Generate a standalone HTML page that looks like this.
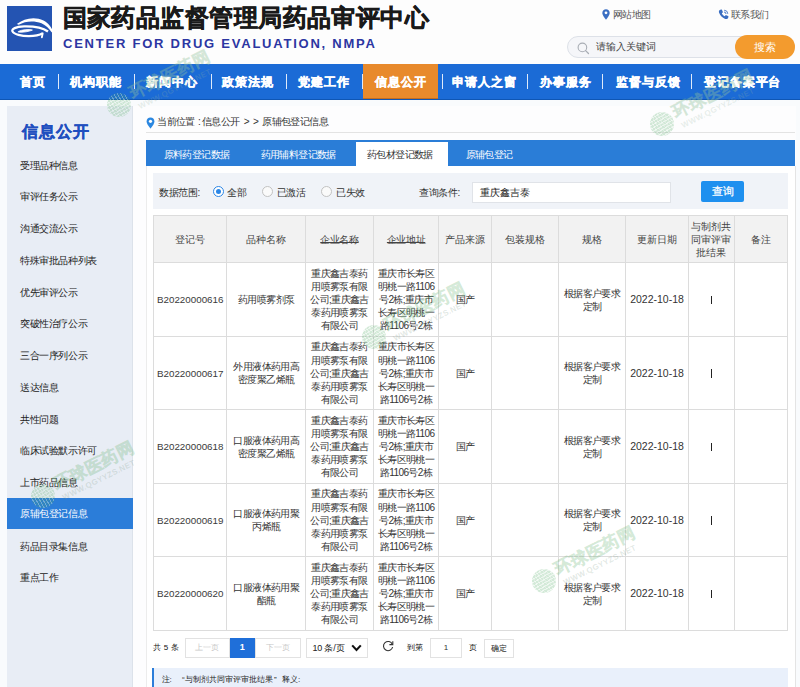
<!DOCTYPE html>
<html><head><meta charset="utf-8">
<style>
*{margin:0;padding:0;box-sizing:border-box}
html,body{width:800px;height:687px;overflow:hidden}
body{position:relative;background:#f9fbfd;font-family:"Liberation Sans",sans-serif;color:#333;font-size:10px}
.abs{position:absolute}
#header{left:0;top:0;width:800px;height:64px;background:#fdfdfd}
#logo{left:7px;top:6px;width:45px;height:45px;background:#2454b2}
#title{left:62.5px;top:2.5px;font-size:24px;font-weight:bold;-webkit-text-stroke:0.5px #1a1a1a;color:#1a1a1a;letter-spacing:0.45px;white-space:nowrap;line-height:30px}
#entitle{left:63px;top:35.5px;font-size:13px;font-weight:bold;color:#2c36a2;letter-spacing:1.77px;white-space:nowrap;line-height:16px}
.toplink{top:9px;font-size:10px;letter-spacing:-0.6px;color:#555;line-height:12px;white-space:nowrap}
#search{left:567px;top:35.7px;width:228px;height:22px;border:1px solid #dde1e8;border-radius:12px;background:#f5f6f9}
#search span{position:absolute;left:27.5px;top:4.8px;font-size:10px;letter-spacing:0.2px;color:#444;line-height:12px}
#sbtn{left:735px;top:35px;width:60px;height:24px;border-radius:12px;background:#f39b2e;color:#fff;font-size:11px;line-height:24px;text-align:center}
#nav{left:0;top:64px;width:800px;height:36px;background:#1b6bd6;border-bottom:1px solid #0f56b4}
.ni{position:absolute;top:0;height:36px;line-height:36px;color:#fff;font-size:12px;letter-spacing:0.9px;font-weight:bold;-webkit-text-stroke:0.45px #fff;white-space:nowrap}
.ns{position:absolute;top:10px;width:1.2px;height:15px;background:#dfeafa}
#navact{left:363px;top:0;width:75px;height:35px;background:#e88a2c;border-bottom:1px solid #c06d22}
#side{left:7px;top:106px;width:126px;height:581px;background:#e8edf5;box-shadow:inset -1px 0 0 #dce2ea}
#side h2{position:absolute;left:14.5px;top:15.5px;font-size:16px;letter-spacing:1.3px;-webkit-text-stroke:0.35px #1f4fbf;line-height:20px;color:#1f4fbf;font-weight:bold;white-space:nowrap}
.si{position:absolute;left:0;width:126px;height:31px;line-height:31px;padding-left:13px;font-size:10px;letter-spacing:-0.4px;color:#222;white-space:nowrap}
.si.act{background:#2b7dd9;color:#fff}
#content{left:133px;top:106px;width:663px;height:581px;background:#fdfdfe}

.crumb{top:116px;font-size:10px;letter-spacing:-0.6px;line-height:12px;color:#333;white-space:nowrap}
#panel{left:146px;top:166px;width:649.5px;height:521px;background:#fff;border-left:1px solid #ececec;border-right:1px solid #e4e4e4}
#tabbar{left:146px;top:140px;width:649px;height:26px;background:#2a7dd7}
#tabact{left:356px;top:142px;width:92px;height:24px;background:#fff}
.tab{top:148px;font-size:10px;letter-spacing:-0.6px;line-height:13px;color:#fff;white-space:nowrap}
#filter{left:153px;top:173px;width:635px;height:36px;background:#f0f3f8}
.ft{top:185.5px;font-size:10px;letter-spacing:-0.4px;line-height:13px;color:#333;white-space:nowrap}
.radio{top:185.8px;width:11.4px;height:11.4px;border:1px solid #c2c2c2;border-radius:50%;background:#fafafa}
.radio.on{border-color:#2b86e6}
.radio.on{background:#fff}
.radio.on:after{content:"";position:absolute;left:2.2px;top:2.2px;width:5px;height:5px;border-radius:50%;background:#2b86e6}
#qinput{left:471.5px;top:182px;width:199px;height:21px;background:#fff;border:1px solid #e0e3e8}
#qinput span{position:absolute;left:7px;top:3px;font-size:9.6px;line-height:13px;color:#222}
#qbtn{left:701px;top:181px;width:43px;height:20.5px;background:#1e90ef;border-radius:2px;color:#fff;font-size:11px;-webkit-text-stroke:0.25px #fff;line-height:20.5px;text-align:center}
#tbl{left:153px;top:215px;border-collapse:collapse;table-layout:fixed;width:634px}
#tbl td{border:1px solid #dcdcdc;text-align:center;vertical-align:middle;font-size:10px;line-height:13.1px;color:#333;padding:0;overflow:hidden}
#tbl tr.th td{height:47.4px;background:#f2f2f2;color:#444}
#tbl tr.tr td{height:73.5px;letter-spacing:-0.6px}
#tbl tr.tr td.en,#tbl tr.tr td.dt{letter-spacing:0}
#tbl td.en{font-size:9.8px;color:#3a3a3a}
#tbl td.dt{font-size:10.5px}
#tbl u{text-decoration:underline;text-decoration-thickness:1px;text-underline-offset:-0.5px;text-decoration-color:#444;letter-spacing:-0.4px}
.bar{display:inline-block;width:1.4px;height:8.5px;background:#222;vertical-align:middle;position:relative;top:-0.5px}
.pg{font-size:10px;color:#111;white-space:nowrap}
#pager{left:184.5px;top:638px;height:19.6px;display:flex}
.pb{height:19.6px;border:1px solid #e2e2e2;text-align:center;font-size:8px;line-height:17.6px;color:#c8c8c8;background:#fff}
.pb.cur{background:#1f6fd9;border-color:#1f6fd9;color:#fff;font-weight:bold;font-size:9px}
#psel{left:306px;top:638px;width:62.3px;height:19.5px;border:1px solid #e2e2e2;background:#fff}
#psel span{position:absolute;left:5.5px;top:4px;font-size:9px;letter-spacing:-0.2px;line-height:10px;color:#222;white-space:nowrap}
#pinput{left:430px;top:638px;width:32px;height:19.5px;border:1px solid #e2e2e2;background:#fff;text-align:center;font-size:8px;line-height:17.5px;color:#333}
#pok{left:483.5px;top:638.5px;width:30.5px;height:19px;border:1px solid #e2e2e2;background:#fff;text-align:center;font-size:8px;line-height:17px;color:#222}
#note{left:152px;top:667.5px;width:636px;height:20px;background:#e9f0fb;border-left:2.7px solid #2b7dd9}
#note span{position:absolute;top:7.5px;font-size:8px;line-height:10px;color:#222;white-space:nowrap}

.wm{position:absolute;width:0;height:0;pointer-events:none}
.wm .g{position:absolute;left:-12px;top:-12px;width:24px;height:24px;border-radius:50%;background:repeating-linear-gradient(60deg,rgba(255,255,255,0) 0 2px,rgba(255,255,255,0.3) 2px 3px),repeating-linear-gradient(-30deg,rgba(80,170,100,0.25) 0 2px,rgba(80,170,100,0.1) 2px 3px)}
.wm .t{position:absolute;left:16px;top:-20px;transform-origin:0 100%;transform:rotate(-26.5deg);white-space:nowrap;font-size:17px;font-weight:bold;color:rgba(120,200,130,0.15);-webkit-text-stroke:0.7px rgba(80,160,95,0.18);line-height:18px;letter-spacing:0.5px}
.wm .u{position:absolute;left:22px;top:-3px;transform-origin:0 100%;transform:rotate(-26.5deg);white-space:nowrap;font-size:8px;font-weight:bold;color:rgba(120,150,130,0.22);line-height:9px;letter-spacing:0.3px}

.wm.n .t{color:rgba(170,215,180,0.22);-webkit-text-stroke:0.7px rgba(130,180,140,0.22)}
.wm.n .u{color:rgba(150,180,160,0.22)}
</style></head><body>
<div id="header" class="abs"></div>
<div id="logo" class="abs"></div><svg class="abs" style="left:6px;top:14px" width="48" height="28" viewBox="0 0 800 467">
<path d="M180,168 C300,70 480,35 625,108 C710,152 755,225 795,300 L760,305 C718,236 662,186 592,154 C472,108 322,112 212,180 Z" fill="#fff"/>
<path d="M700,292 C610,228 440,205 300,208 C160,214 88,250 108,290 C130,338 260,368 380,368 C480,368 560,352 612,322" stroke="#fff" stroke-width="38" fill="none" stroke-linejoin="round"/>
<path d="M612,322 L598,388" stroke="#fff" stroke-width="30" fill="none" stroke-linecap="round"/>
<path d="M205,292 C260,262 380,250 440,268 C390,292 280,310 205,302 Z" fill="#fff" stroke="#fff" stroke-width="14"/>
</svg>
<div id="title" class="abs">国家药品监督管理局药品审评中心</div>
<div id="entitle" class="abs">CENTER FOR DRUG EVALUATION, NMPA</div>
<svg class="abs" style="left:601.5px;top:8.5px" width="8" height="11" viewBox="0 0 8 11"><path d="M4 0.3C1.9 0.3 0.3 1.9 0.3 3.9c0 2.4 3.7 6.8 3.7 6.8s3.7-4.4 3.7-6.8C7.7 1.9 6.1 0.3 4 0.3z" fill="#3a6ec2"/><circle cx="4" cy="3.8" r="1.4" fill="#fff"/></svg>
<div class="abs toplink" style="left:613px">网站地图</div>
<svg class="abs" style="left:717.5px;top:8.5px" width="11" height="11" viewBox="0 0 11 11"><path d="M2.2 0.8L3.8 0.5L5 3.2L3.8 4.2C4.4 5.6 5.4 6.6 6.8 7.2L7.8 6L10.5 7.2L10.2 8.8C9.8 10 8.5 10.4 7.2 9.9C4.2 8.8 2.2 6.8 1.1 3.8C0.6 2.5 1 1.2 2.2 0.8z" fill="#3a6ec2"/><path d="M6.2 1.2A3.8 3.8 0 0 1 9.8 4.8M6 3A2 2 0 0 1 8 5" stroke="#3a6ec2" stroke-width="0.9" fill="none"/></svg>
<div class="abs toplink" style="left:731px">联系我们</div>
<div id="search" class="abs"><svg style="position:absolute;left:9px;top:5px" width="13" height="13" viewBox="0 0 13 13"><circle cx="5.4" cy="5.4" r="4.3" stroke="#a8adb4" stroke-width="1.1" fill="none"/><path d="M8.6 8.6L11.5 11.5" stroke="#a8adb4" stroke-width="1.3" stroke-linecap="round"/></svg><span>请输入关键词</span></div>
<div id="sbtn" class="abs">搜索</div>

<div id="nav" class="abs">
 <div id="navact" class="abs"></div>
 <div class="ni" style="left:20px">首页</div><div class="ns" style="left:58px"></div>
 <div class="ni" style="left:70px">机构职能</div><div class="ns" style="left:134px"></div>
 <div class="ni" style="left:146px">新闻中心</div><div class="ns" style="left:211px"></div>
 <div class="ni" style="left:222px">政策法规</div><div class="ns" style="left:286px"></div>
 <div class="ni" style="left:298px">党建工作</div><div class="ns" style="left:362px"></div>
 <div class="ni" style="left:375px">信息公开</div><div class="ns" style="left:442px"></div>
 <div class="ni" style="left:452px">申请人之窗</div><div class="ns" style="left:527px"></div>
 <div class="ni" style="left:540px">办事服务</div><div class="ns" style="left:602px"></div>
 <div class="ni" style="left:616px">监督与反馈</div><div class="ns" style="left:691px"></div>
 <div class="ni" style="left:704px">登记备案平台</div>
</div>

<div id="side" class="abs">
 <h2>信息公开</h2>
 <div class="si" style="top:43.50px">受理品种信息</div>
 <div class="si" style="top:75.25px">审评任务公示</div>
 <div class="si" style="top:107.00px">沟通交流公示</div>
 <div class="si" style="top:138.75px">特殊审批品种列表</div>
 <div class="si" style="top:170.50px">优先审评公示</div>
 <div class="si" style="top:202.25px">突破性治疗公示</div>
 <div class="si" style="top:234.00px">三合一序列公示</div>
 <div class="si" style="top:265.75px">送达信息</div>
 <div class="si" style="top:297.50px">共性问题</div>
 <div class="si" style="top:329.25px">临床试验默示许可</div>
 <div class="si" style="top:361.00px">上市药品信息</div>
 <div class="si act" style="top:391.60px">原辅包登记信息</div>
 <div class="si" style="top:424.50px">药品目录集信息</div>
 <div class="si" style="top:456.25px">重点工作</div>
</div>

<div id="content" class="abs"></div>
<svg class="abs" style="left:146px;top:117px" width="9" height="12" viewBox="0 0 9 12"><path d="M4.5 0.5C2.2 0.5 0.6 2.2 0.6 4.4c0 2.6 3.9 7.1 3.9 7.1s3.9-4.5 3.9-7.1C8.4 2.2 6.8 0.5 4.5 0.5z" fill="#2b87e0"/><circle cx="4.5" cy="4.3" r="1.6" fill="#fff"/></svg>
<div class="crumb abs" style="left:157.3px">当前位置</div><div class="crumb abs" style="left:198px">:</div><div class="crumb abs" style="left:201.8px">信息公开</div><div class="crumb abs" style="left:243.8px">&gt;</div><div class="crumb abs" style="left:253px">&gt;</div><div class="crumb abs" style="left:262.3px">原辅包登记信息</div>
<div class="abs" style="left:146px;top:132px;width:649px;height:1px;background:#e3e3e3"></div>
<div id="panel" class="abs"></div>
<div id="tabbar" class="abs"></div>
<div id="tabact" class="abs"></div>
<div class="tab abs" style="left:163.5px">原料药登记数据</div>
<div class="tab abs" style="left:260.5px">药用辅料登记数据</div>
<div class="tab abs" style="left:367px;color:#333">药包材登记数据</div>
<div class="tab abs" style="left:465.5px">原辅包登记</div>
<div id="filter" class="abs"></div>
<div class="ft abs" style="left:159px">数据范围:</div>
<div class="radio on abs" style="left:212.5px"></div><div class="ft abs" style="left:227px">全部</div>
<div class="radio abs" style="left:261.5px"></div><div class="ft abs" style="left:276.5px">已激活</div>
<div class="radio abs" style="left:321px"></div><div class="ft abs" style="left:336px">已失效</div>
<div class="ft abs" style="left:419px">查询条件:</div>
<div id="qinput" class="abs"><span>重庆鑫吉泰</span></div>
<div id="qbtn" class="abs">查询</div>
<table id="tbl" class="abs"><colgroup><col style="width:73.4px"><col style="width:78.8px"><col style="width:67.5px"><col style="width:65.8px"><col style="width:53.0px"><col style="width:66.5px"><col style="width:67px"><col style="width:63px"><col style="width:46px"><col style="width:53px"></colgroup>
<tr class="th"><td>登记号</td><td>品种名称</td><td><u>企业名称</u></td><td><u>企业地址</u></td><td>产品来源</td><td>包装规格</td><td>规格</td><td>更新日期</td><td>与制剂共<br>同审评审<br>批结果</td><td>备注</td></tr>
<tr class="tr"><td class="en">B20220000616</td><td>药用喷雾剂泵</td><td>重庆鑫吉泰药<br>用喷雾泵有限<br>公司;重庆鑫吉<br>泰药用喷雾泵<br>有限公司</td><td>重庆市长寿区<br>明桃一路1106<br>号2栋;重庆市<br>长寿区明桃一<br>路1106号2栋</td><td>国产</td><td></td><td>根据客户要求<br>定制</td><td class="dt">2022-10-18</td><td><i class="bar"></i></td><td></td></tr>
<tr class="tr"><td class="en">B20220000617</td><td>外用液体药用高<br>密度聚乙烯瓶</td><td>重庆鑫吉泰药<br>用喷雾泵有限<br>公司;重庆鑫吉<br>泰药用喷雾泵<br>有限公司</td><td>重庆市长寿区<br>明桃一路1106<br>号2栋;重庆市<br>长寿区明桃一<br>路1106号2栋</td><td>国产</td><td></td><td>根据客户要求<br>定制</td><td class="dt">2022-10-18</td><td><i class="bar"></i></td><td></td></tr>
<tr class="tr"><td class="en">B20220000618</td><td>口服液体药用高<br>密度聚乙烯瓶</td><td>重庆鑫吉泰药<br>用喷雾泵有限<br>公司;重庆鑫吉<br>泰药用喷雾泵<br>有限公司</td><td>重庆市长寿区<br>明桃一路1106<br>号2栋;重庆市<br>长寿区明桃一<br>路1106号2栋</td><td>国产</td><td></td><td>根据客户要求<br>定制</td><td class="dt">2022-10-18</td><td><i class="bar"></i></td><td></td></tr>
<tr class="tr"><td class="en">B20220000619</td><td>口服液体药用聚<br>丙烯瓶</td><td>重庆鑫吉泰药<br>用喷雾泵有限<br>公司;重庆鑫吉<br>泰药用喷雾泵<br>有限公司</td><td>重庆市长寿区<br>明桃一路1106<br>号2栋;重庆市<br>长寿区明桃一<br>路1106号2栋</td><td>国产</td><td></td><td>根据客户要求<br>定制</td><td class="dt">2022-10-18</td><td><i class="bar"></i></td><td></td></tr>
<tr class="tr"><td class="en">B20220000620</td><td>口服液体药用聚<br>酯瓶</td><td>重庆鑫吉泰药<br>用喷雾泵有限<br>公司;重庆鑫吉<br>泰药用喷雾泵<br>有限公司</td><td>重庆市长寿区<br>明桃一路1106<br>号2栋;重庆市<br>长寿区明桃一<br>路1106号2栋</td><td>国产</td><td></td><td>根据客户要求<br>定制</td><td class="dt">2022-10-18</td><td><i class="bar"></i></td><td></td></tr>
</table>

<div class="pg abs" style="left:152.5px;top:643px;line-height:10px;font-size:8px;color:#111;word-spacing:1px">共 5 条</div>
<div id="pager" class="abs"><div class="pb dis" style="width:45px">上一页</div><div class="pb cur" style="width:25.6px">1</div><div class="pb dis" style="width:45.5px">下一页</div></div>
<div id="psel" class="abs"><span>10 条/页</span><svg style="position:absolute;left:44px;top:4.5px" width="11" height="8" viewBox="0 0 11 8"><path d="M1.2 1.4l4.3 4.6 4.3-4.6" stroke="#111" stroke-width="2.1" fill="none"/></svg></div>
<svg class="abs" style="left:382px;top:640px" width="12" height="12" viewBox="0 0 12 12"><path d="M10.3 4.2A4.6 4.6 0 1 0 10.6 7" stroke="#333" stroke-width="1.1" fill="none"/><path d="M10.8 1.2v3.4H7.4" stroke="#333" stroke-width="1.1" fill="none"/></svg>
<div class="pg abs" style="left:406.5px;top:643px;line-height:10px;font-size:8px">到第</div>
<div id="pinput" class="abs">1</div>
<div class="pg abs" style="left:468.5px;top:643px;line-height:10px;font-size:8px">页</div>
<div id="pok" class="abs">确定</div>
<div id="note" class="abs"><span style="left:7.5px">注:</span><span style="left:28px">“</span><span style="left:31px">与制剂共同审评审批结果</span><span style="left:120px">”</span><span style="left:128px">释义:</span></div>
<div class="wm n" style="left:119px;top:105px"><div class="g"></div><div class="t">环球医药网</div><div class="u">WWW.QGYYZS.NET</div></div>
<div class="wm n" style="left:662px;top:124px"><div class="g"></div><div class="t">环球医药网</div><div class="u">WWW.QGYYZS.NET</div></div>
<div class="wm " style="left:43px;top:496px"><div class="g"></div><div class="t">环球医药网</div><div class="u">WWW.QGYYZS.NET</div></div>
<div class="wm " style="left:374px;top:337px"><div class="g"></div><div class="t">环球医药网</div><div class="u">WWW.QGYYZS.NET</div></div>
<div class="wm " style="left:544px;top:581px"><div class="g"></div><div class="t">环球医药网</div><div class="u">WWW.QGYYZS.NET</div></div>
</body></html>
